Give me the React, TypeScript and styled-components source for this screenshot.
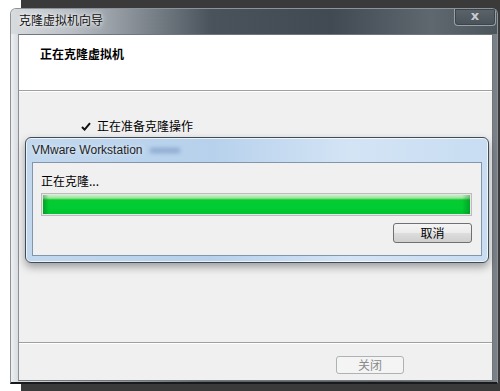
import React from "react";
import styled, { createGlobalStyle } from "styled-components";

const GlobalStyle = createGlobalStyle`
	html, body {
		margin: 0;
		padding: 0;
		background: #ffffff;
	}
	body {
		font-family: "Noto Sans CJK SC", "Liberation Sans", sans-serif;
		font-size: 12px;
		color: #000;
	}
`;

const CheckIcon = () => (
	<svg width="10" height="9" viewBox="0 0 10 9">
		<path d="M1 5 L3.6 7.6 L9 1.2" fill="none" stroke="#111" strokeWidth="2" />
	</svg>
);

const App = () => {
	return (
		<Page>
			<GlobalStyle />
			<Window>
				<TitleBar>
					<WindowTitle>克隆虚拟机向导</WindowTitle>
					<CloseButton>x</CloseButton>
				</TitleBar>
				<Client>
					<Header>
						<HeaderTitle>正在克隆虚拟机</HeaderTitle>
					</Header>
					<Body>
						<StepRow>
							<CheckIcon />
							<span>正在准备克隆操作</span>
						</StepRow>
						<Dialog>
							<DialogTitleBar>
								<DialogTitle>VMware Workstation</DialogTitle>
								<Smudge />
							</DialogTitleBar>
							<DialogClient>
								<StatusText>正在克隆...</StatusText>
								<ProgressTrack>
									<ProgressFill style={{ width: "100%" }} />
								</ProgressTrack>
								<ButtonRow>
									<Button>取消</Button>
								</ButtonRow>
							</DialogClient>
						</Dialog>
					</Body>
					<Footer>
						<Button disabled>关闭</Button>
					</Footer>
				</Client>
			</Window>
		</Page>
	);
};

const Page = styled.div`
	width: 500px;
	height: 391px;
	box-sizing: border-box;
	padding: 8px 2px 0 10px;
	overflow: hidden;
	background: linear-gradient(to right, #ffffff 0 21px, #3a3a3a 21px);
`;

const Window = styled.div`
	height: 376px;
	display: flex;
	flex-direction: column;
	border-radius: 6px 6px 0 0;
	border: 1px solid #8c9399;
	border-bottom: 2px solid #1a1a1a;
	box-sizing: border-box;
	background: linear-gradient(
		to right,
		#eef0f2 0,
		#d6dadd 8px,
		#5d656d 40%,
		#535b63 80%,
		#7a8188 100%
	);
	overflow: hidden;
`;

const TitleBar = styled.div`
	height: 25px;
	flex: none;
	display: flex;
	align-items: flex-start;
	padding-left: 8px;
	background: linear-gradient(
		to right,
		#d8dcdf 0,
		#b9bfc5 60px,
		#4a535c 200px,
		#414a53 320px,
		#5f676f 420px,
		#4c545c 100%
	);
`;

const WindowTitle = styled.div`
	margin-top: 4px;
	font-size: 12px;
	line-height: 14px;
	color: #111;
	text-shadow: 0 0 6px rgba(255, 255, 255, 0.9), 0 0 3px rgba(255, 255, 255, 0.9);
`;

const CloseButton = styled.div`
	margin-left: auto;
	margin-right: 1px;
	width: 42px;
	height: 17px;
	box-sizing: border-box;
	border: 1px solid #9aa0a6;
	border-top: none;
	border-radius: 0 0 4px 4px;
	box-shadow: inset 0 0 0 1px #3c444c;
	background: linear-gradient(to bottom, #5a626a, #4a525a);
	color: #c9cccf;
	font-family: "DejaVu Sans", sans-serif;
	font-weight: bold;
	font-size: 13px;
	line-height: 13px;
	text-align: center;
`;

const Client = styled.div`
	flex: 1;
	display: flex;
	flex-direction: column;
	margin: 0 4px 1px 7px;
	border: 1px solid #6f767d;
	border-left-color: #8a9096;
	background: #f0f0f0;
`;

const Header = styled.div`
	height: 56px;
	flex: none;
	background: #ffffff;
	border-bottom: 1px solid #a0a0a0;
	box-shadow: 0 1px 0 #ffffff;
	padding: 11px 0 0 21px;
	box-sizing: border-box;
`;

const HeaderTitle = styled.div`
	font-weight: bold;
	font-size: 12px;
	line-height: 16px;
`;

const Body = styled.div`
	height: 252px;
	flex: none;
	box-sizing: border-box;
	padding: 27px 0 0 6px;
	border-bottom: 1px solid #a0a0a0;
`;

const StepRow = styled.div`
	display: flex;
	align-items: center;
	gap: 6px;
	height: 16px;
	padding-left: 56px;
	font-size: 12px;
	line-height: 16px;
`;

const Dialog = styled.div`
	margin-top: 3px;
	width: 464px;
	height: 126px;
	box-sizing: border-box;
	display: flex;
	flex-direction: column;
	border: 1px solid #3f4b57;
	border-radius: 6px;
	background: linear-gradient(to right, #c2d8ee 0, #b7d1ec 40%, #d3e4f5 70%, #c8ddf2 100%);
	box-shadow: inset 0 0 0 1px rgba(255, 255, 255, 0.7), 0 4px 9px rgba(0, 0, 0, 0.35);
`;

const DialogTitleBar = styled.div`
	height: 24px;
	flex: none;
	display: flex;
	align-items: center;
	padding-left: 6px;
`;

const DialogTitle = styled.span`
	font-family: "Liberation Sans", sans-serif;
	font-size: 12px;
	color: #1e1e1e;
	text-shadow: 0 0 4px rgba(255, 255, 255, 0.8);
`;

const Smudge = styled.span`
	margin-left: 8px;
	width: 30px;
	height: 5px;
	background: #8aa8cf;
	filter: blur(2px);
`;

const DialogClient = styled.div`
	flex: 1;
	margin: 0 6px 6px 6px;
	border: 1px solid #8196ab;
	background: #f0f0f0;
	padding: 10px 9px 0 8px;
	box-sizing: border-box;
	display: flex;
	flex-direction: column;
`;

const StatusText = styled.div`
	font-size: 12px;
	line-height: 16px;
`;

const ProgressTrack = styled.div`
	margin-top: 4px;
	height: 23px;
	box-sizing: border-box;
	border: 1px solid #bcbcbc;
	background: #e6e6e6;
	padding: 1px;
`;

const ProgressFill = styled.div`
	height: 100%;
	background:
		linear-gradient(to right, rgba(0, 90, 20, 0.35) 0, rgba(0, 0, 0, 0) 6px, rgba(0, 0, 0, 0) calc(100% - 8px), rgba(0, 90, 20, 0.35) 100%),
		linear-gradient(to bottom, #c2f2c2 0, #9ee59e 3px, #06cb30 5px, #00cc33 70%, #00c22e 100%);
`;

const ButtonRow = styled.div`
	display: flex;
	justify-content: flex-end;
	margin-top: 7px;
`;

const Button = styled.button`
	width: 79px;
	height: 20px;
	padding: 0;
	box-sizing: border-box;
	border: 1px solid #707070;
	border-radius: 3px;
	background: linear-gradient(to bottom, #f4f4f4 0, #ebebeb 50%, #dddddd 51%, #cfcfcf 100%);
	font-family: "Noto Sans CJK SC", sans-serif;
	font-size: 12px;
	line-height: 18px;
	color: #000;

	&:disabled {
		width: 68px;
		height: 18px;
		line-height: 16px;
		border-color: #adb2b5;
		background: #f4f4f4;
		color: #8a8a8a;
	}
`;

const Footer = styled.div`
	flex: 1;
	border-top: 1px solid #ffffff;
	display: flex;
	align-items: flex-start;
	padding: 12px 0 0 317px;
`;

export default App;
